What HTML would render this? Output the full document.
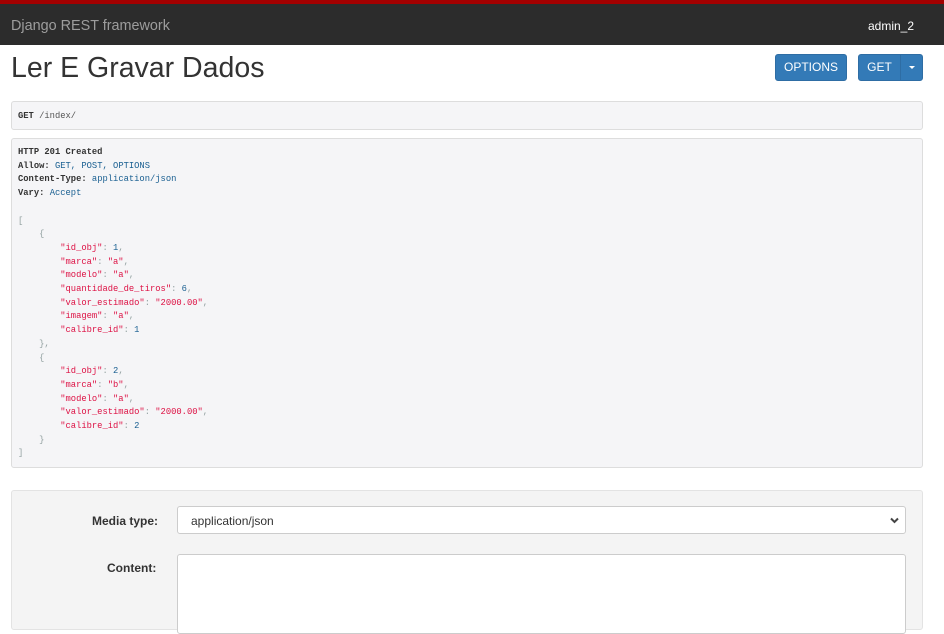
<!DOCTYPE html>
<html><head><meta charset="utf-8"><style>
*{box-sizing:border-box}
body{margin:0;width:944px;height:618px;overflow:hidden;background:#fff;font-family:"Liberation Sans",sans-serif;color:#333;position:relative}
.red{position:absolute;left:0;top:0;width:944px;height:4px;background:#a30000}
.nav{position:absolute;left:0;top:4px;width:944px;height:41px;background:#2c2c2c}
.brand{position:absolute;left:11px;top:14px;font-size:14.4px;color:#9d9d9d}
.user{position:absolute;left:868px;top:15px;font-size:12px;color:#fff}
h1{position:absolute;left:11px;top:52px;margin:0;font-size:28.5px;font-weight:normal;color:#333}
.btn{position:absolute;top:54px;height:27px;background:#337ab7;border:1px solid #2e6da4;border-radius:3px;color:#fff;font-size:12px;text-align:center;line-height:25px}
.box{position:absolute;left:11px;width:912px;background:#f5f5f7;border:1px solid #ddd;border-radius:3px;font-family:"Liberation Mono",monospace;font-size:8.8px}
pre{margin:0;font-family:inherit;line-height:13.7px;color:#333}
b{font-weight:bold;color:#333}
.m{color:#195f91}.s{color:#dd1144}.p{color:#93a1a1}.n{color:#195f91}
.well{position:absolute;left:11px;top:490px;width:912px;height:140px;background:#f4f4f4;border:1px solid #e3e3e3;border-radius:3px}
.lbl{position:absolute;font-size:12px;font-weight:bold;color:#333}
.sel{position:absolute;left:177px;top:506px;width:729px;height:28px;background:#fff;border:1px solid #ccc;border-radius:3px;font-size:12px;padding:7px 13px}
.ta{position:absolute;left:177px;top:554px;width:729px;height:80px;background:#fff;border:1px solid #ccc;border-radius:3px}
</style></head><body>
<div class="red"></div>
<div class="nav"><div class="brand">Django REST framework</div><div class="user">admin_2</div></div>
<h1>Ler E Gravar Dados</h1>
<div class="btn" style="left:775px;width:72px">OPTIONS</div>
<div class="btn" style="left:858px;width:43px;border-radius:3px 0 0 3px">GET</div>
<div class="btn" style="left:900px;width:23px;border-radius:0 3px 3px 0"><span style="display:inline-block;width:0;height:0;border-left:3px solid transparent;border-right:3px solid transparent;border-top:3px solid #fff;vertical-align:middle"></span></div>
<div class="box" style="top:101px;height:29px;padding:8px 6px"><pre><b>GET</b> <span style="color:#555">/index/</span></pre></div>
<div class="box" style="top:138px;height:330px;padding:7px 6px"><pre><b>HTTP 201 Created</b>
<b>Allow:</b> <span class="m">GET, POST, OPTIONS</span>
<b>Content-Type:</b> <span class="m">application/json</span>
<b>Vary:</b> <span class="m">Accept</span>

<span class="p">[</span>
    <span class="p">{</span>
        <span class="s">"id_obj"</span><span class="p">:</span> <span class="n">1</span><span class="p">,</span>
        <span class="s">"marca"</span><span class="p">:</span> <span class="s">"a"</span><span class="p">,</span>
        <span class="s">"modelo"</span><span class="p">:</span> <span class="s">"a"</span><span class="p">,</span>
        <span class="s">"quantidade_de_tiros"</span><span class="p">:</span> <span class="n">6</span><span class="p">,</span>
        <span class="s">"valor_estimado"</span><span class="p">:</span> <span class="s">"2000.00"</span><span class="p">,</span>
        <span class="s">"imagem"</span><span class="p">:</span> <span class="s">"a"</span><span class="p">,</span>
        <span class="s">"calibre_id"</span><span class="p">:</span> <span class="n">1</span>
    <span class="p">},</span>
    <span class="p">{</span>
        <span class="s">"id_obj"</span><span class="p">:</span> <span class="n">2</span><span class="p">,</span>
        <span class="s">"marca"</span><span class="p">:</span> <span class="s">"b"</span><span class="p">,</span>
        <span class="s">"modelo"</span><span class="p">:</span> <span class="s">"a"</span><span class="p">,</span>
        <span class="s">"valor_estimado"</span><span class="p">:</span> <span class="s">"2000.00"</span><span class="p">,</span>
        <span class="s">"calibre_id"</span><span class="p">:</span> <span class="n">2</span>
    <span class="p">}</span>
<span class="p">]</span></pre></div>
<div class="well"></div>
<div class="lbl" style="left:92px;top:514px">Media type:</div>
<div class="sel">application/json<svg style="position:absolute;right:6px;top:10px" width="9" height="7" viewBox="0 0 9 7"><path d="M1 1.5L4.5 5 8 1.5" stroke="#444" stroke-width="2" fill="none"/></svg></div>
<div class="lbl" style="left:107px;top:561px">Content:</div>
<div class="ta"></div>
</body></html>
